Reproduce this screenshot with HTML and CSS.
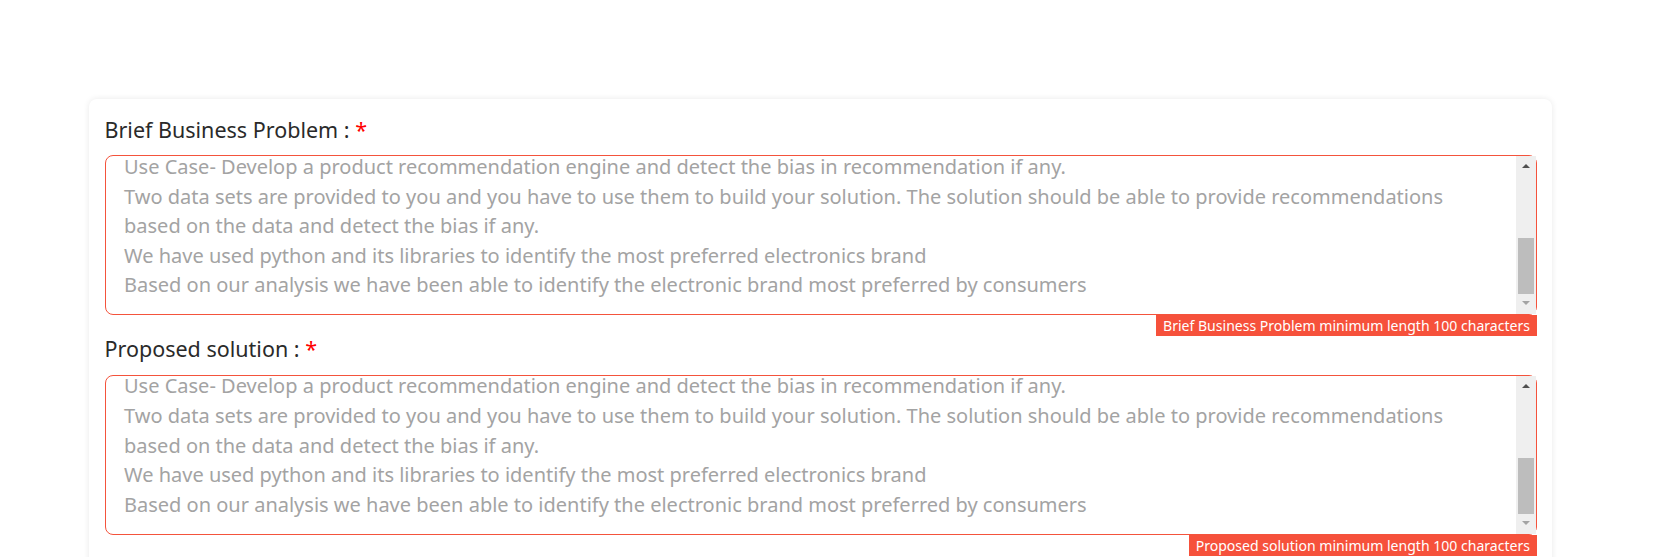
FILE: index.html
```html
<!DOCTYPE html>
<html lang="en">
<head>
<meta charset="utf-8">
<title>Submission</title>
<link rel="stylesheet" href="styles.css">
</head>
<body>
<div class="card">
  <div class="field">
    <label class="label" for="problem">Brief Business Problem : <span class="req">*</span></label>
    <div class="box">
      <textarea id="problem" class="input">Use Case- Develop a product recommendation engine and detect the bias in recommendation if any.
Two data sets are provided to you and you have to use them to build your solution. The solution should be able to provide recommendations
based on the data and detect the bias if any.
We have used python and its libraries to identify the most preferred electronics brand
Based on our analysis we have been able to identify the electronic brand most preferred by consumers
Use Case- Develop a product recommendation engine and detect the bias in recommendation if any.
Two data sets are provided to you and you have to use them to build your solution. The solution should be able to provide recommendations
based on the data and detect the bias if any.
We have used python and its libraries to identify the most preferred electronics brand
Based on our analysis we have been able to identify the electronic brand most preferred by consumers</textarea>
      <div class="sbar">
        <div class="sbtn up"></div>
        <div class="strack"><div class="sthumb"></div></div>
        <div class="sbtn down"></div>
      </div>
    </div>
    <div class="error">Brief Business Problem minimum length 100 characters</div>
  </div>
  <div class="field">
    <label class="label" for="solution">Proposed solution : <span class="req">*</span></label>
    <div class="box">
      <textarea id="solution" class="input">Use Case- Develop a product recommendation engine and detect the bias in recommendation if any.
Two data sets are provided to you and you have to use them to build your solution. The solution should be able to provide recommendations
based on the data and detect the bias if any.
We have used python and its libraries to identify the most preferred electronics brand
Based on our analysis we have been able to identify the electronic brand most preferred by consumers
Use Case- Develop a product recommendation engine and detect the bias in recommendation if any.
Two data sets are provided to you and you have to use them to build your solution. The solution should be able to provide recommendations
based on the data and detect the bias if any.
We have used python and its libraries to identify the most preferred electronics brand
Based on our analysis we have been able to identify the electronic brand most preferred by consumers</textarea>
      <div class="sbar">
        <div class="sbtn up"></div>
        <div class="strack"><div class="sthumb"></div></div>
        <div class="sbtn down"></div>
      </div>
    </div>
    <div class="error">Proposed solution minimum length 100 characters</div>
  </div>
</div>
<script src="app.js"></script>
</body>
</html>
```
FILE: styles.css
```css
html, body {
  margin: 0;
  padding: 0;
  background: #ffffff;
}
body {
  font-family: "Noto Sans", "Open Sans", sans-serif;
  color: #2a2a2a;
  overflow: hidden;
}
.card {
  margin: 99px 0 0 89px;
  width: 1463px;
  box-sizing: border-box;
  padding: 17.5px 15px 40px 15.5px;
  background: #ffffff;
  border-radius: 8px;
  box-shadow: 0 0 6px rgba(0, 0, 0, 0.09);
  display: flex;
  flex-direction: column;
}
.field {
  display: flex;
  flex-direction: column;
}
.label {
  display: block;
  font-size: 21.5px;
  line-height: 26px;
  margin-bottom: 12.5px;
  color: #2a2a2a;
}
.req {
  color: #ff0000;
}
.box {
  display: flex;
  height: 160px;
  box-sizing: border-box;
  border: 1px solid #f4533c;
  border-radius: 8px;
  background: #ffffff;
}
.input {
  flex: 1;
  min-width: 0;
  display: block;
  box-sizing: border-box;
  height: 100%;
  margin: 0;
  padding: 18px 14px 14px 18.5px;
  border: 0;
  border-radius: 8px 0 0 8px;
  font-family: "Noto Sans", "Open Sans", sans-serif;
  font-size: 20px;
  line-height: 29.6px;
  color: #a3a3a3;
  background: transparent;
  resize: none;
  outline: none;
  overflow: hidden;
  white-space: pre-wrap;
}
.sbar {
  width: 20px;
  flex: none;
  display: flex;
  flex-direction: column;
  background: #efefef;
}
.sbtn {
  height: 20px;
  flex: none;
  display: flex;
  align-items: center;
  justify-content: center;
}
.sbtn::before {
  content: "";
  width: 0;
  height: 0;
  border-left: 4.5px solid transparent;
  border-right: 4.5px solid transparent;
}
.sbtn.up::before {
  border-bottom: 4.5px solid #505050;
}
.sbtn.down {
  padding-bottom: 2px;
  box-sizing: border-box;
}
.sbtn.down::before {
  border-top: 4.5px solid #a3a3a3;
}
.strack {
  flex: 1;
  display: flex;
  flex-direction: column;
  justify-content: flex-end;
}
.sthumb {
  height: 56px;
  margin: 0 2px;
  background: #bdbdbd;
}
.error {
  align-self: flex-end;
  background: #f6513b;
  color: #ffffff;
  font-size: 14.05px;
  line-height: 21px;
  height: 21px;
  padding: 0 7px;
  white-space: nowrap;
}
```
FILE: app.js
```js
document.querySelectorAll('.input').forEach(function (t) {
  t.scrollTop = t.scrollHeight;
});
```
